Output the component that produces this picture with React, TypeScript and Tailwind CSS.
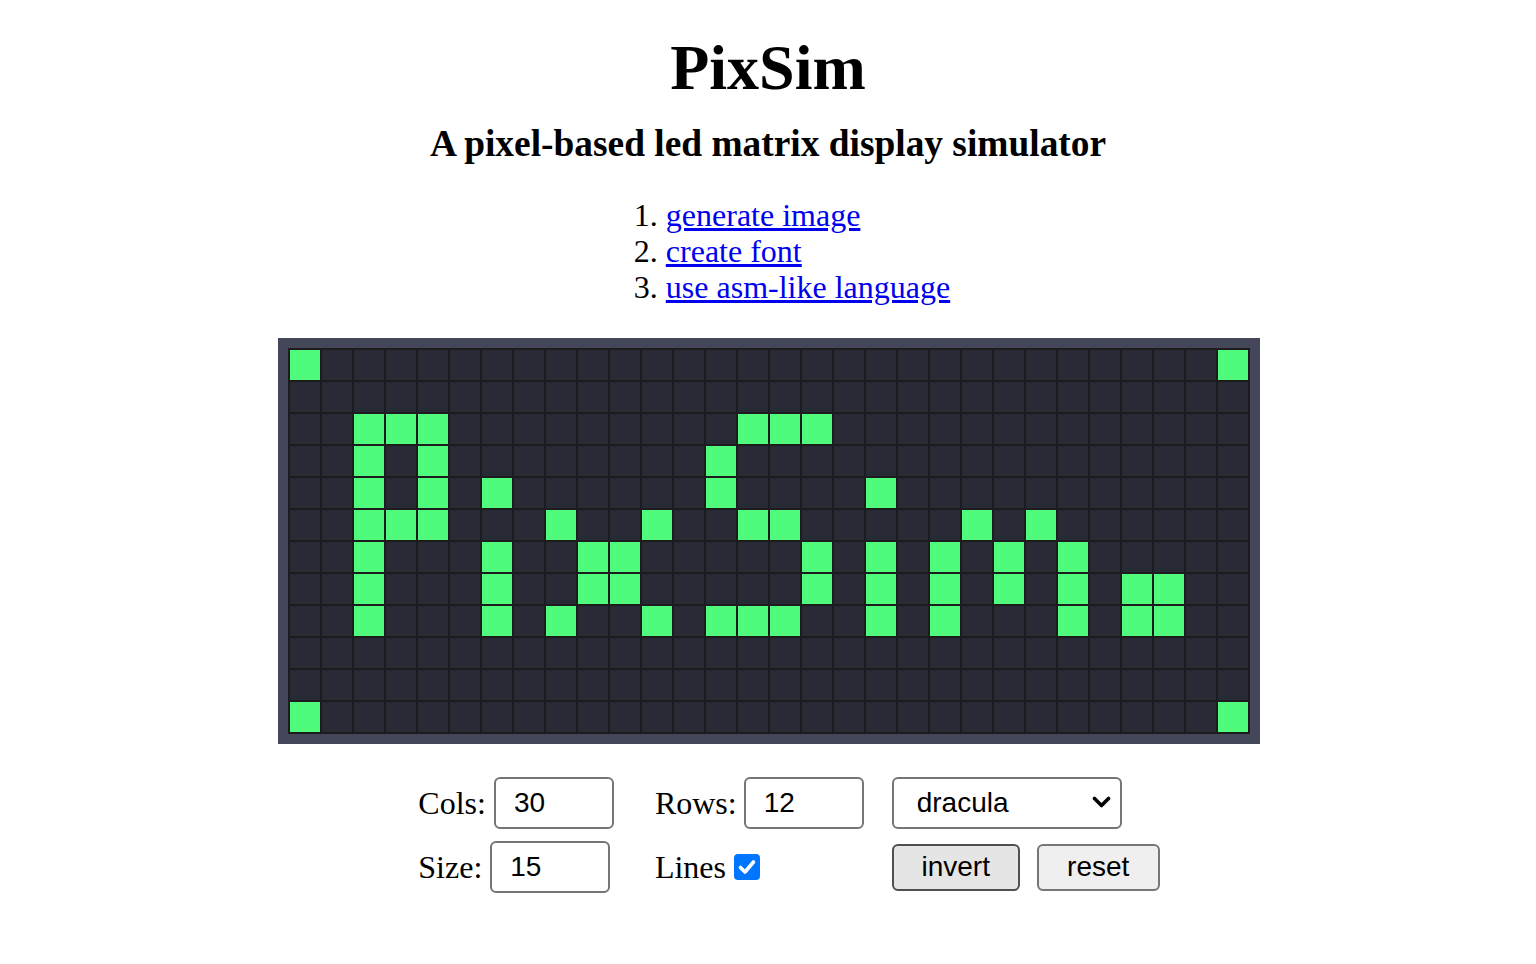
import { useState } from "react";

const COLS = 30;
const ROWS = 12;

// lit pixels per row (column indexes)
const LIT: Record<number, number[]> = {
  0: [0, 29],
  2: [2, 3, 4, 14, 15, 16],
  3: [2, 4, 13],
  4: [2, 4, 6, 13, 18],
  5: [2, 3, 4, 8, 11, 14, 15, 21, 23],
  6: [2, 6, 9, 10, 16, 18, 20, 22, 24],
  7: [2, 6, 9, 10, 16, 18, 20, 22, 24, 26, 27],
  8: [2, 6, 8, 11, 13, 14, 15, 18, 20, 24, 26, 27],
  11: [0, 29],
};

const serif = { fontFamily: '"Liberation Serif", "Times New Roman", serif' };
const sans = { fontFamily: '"Liberation Sans", Arial, sans-serif' };

function Matrix({ inverted }: { inverted: boolean }) {
  const cells = [];
  for (let r = 0; r < ROWS; r++) {
    for (let c = 0; c < COLS; c++) {
      const on = (LIT[r] ?? []).includes(c) !== inverted;
      cells.push(
        <div key={`${r}-${c}`} className={`w-[30px] h-[30px] ${on ? "bg-[#50fa7b]" : "bg-[#282a36]"}`} />
      );
    }
  }
  return (
    <div className="ml-[2px] p-[10px] bg-[#44475a]">
      <div className="grid grid-cols-[repeat(30,30px)] gap-[2px] p-[2px] bg-[#1c1c1e]">{cells}</div>
    </div>
  );
}

export default function App() {
  const [inverted, setInverted] = useState(false);
  const [lines, setLines] = useState(true);

  return (
    <div className="min-h-screen bg-white text-black pt-[31px] text-center" style={serif}>
      <h1 className="text-[64px] leading-[74px] font-bold">PixSim</h1>
      <h3 className="mt-[17px] text-[37.4px] leading-[43px] font-bold">A pixel-based led matrix display simulator</h3>

      <ol className="mt-[32px] inline-block pl-[80px] list-decimal text-left text-[32px] leading-[36px]">
        <li><a href="#" className="text-[#0000ee] underline">generate image</a></li>
        <li><a href="#" className="text-[#0000ee] underline">create font</a></li>
        <li><a href="#" className="text-[#0000ee] underline">use asm-like language</a></li>
      </ol>

      <div className="mt-[33px] flex justify-center">
        <Matrix inverted={inverted} />
      </div>

      {/* Controls */}
      <div className="mt-[33px] flex justify-center text-[32px]">
        <div className="ml-[42px] flex text-left">
          <div className="flex flex-col gap-[12px]">
            <label className="flex items-center gap-2 h-[52px]">
              Cols:
              <input defaultValue="30" className="w-[120px] h-[52px] px-[18px] text-[28px] border-2 border-[#767676] rounded-[6px] outline-none" style={sans} />
            </label>
            <label className="flex items-center gap-2 h-[52px]">
              Size:
              <input defaultValue="15" className="w-[120px] h-[52px] px-[18px] text-[28px] border-2 border-[#767676] rounded-[6px] outline-none" style={sans} />
            </label>
          </div>

          <div className="ml-[41px] flex flex-col gap-[12px]">
            <label className="flex items-center gap-[7px] h-[52px]">
              Rows:
              <input defaultValue="12" className="w-[120px] h-[52px] px-[18px] text-[28px] border-2 border-[#767676] rounded-[6px] outline-none" style={sans} />
            </label>
            <label className="flex items-center gap-2 h-[52px] cursor-pointer" onClick={() => setLines((v) => !v)}>
              Lines
              <span className={`w-[26px] h-[26px] rounded-[4px] flex items-center justify-center ${lines ? "bg-[#0075ff]" : "border-2 border-[#767676] bg-white"}`}>
                {lines && (
                  <svg width="26" height="26" viewBox="0 0 26 26" fill="none">
                    <path d="M6.5 13.5 L11 18 L19.5 8" stroke="white" strokeWidth="3.6" strokeLinecap="round" strokeLinejoin="round" />
                  </svg>
                )}
              </span>
            </label>
          </div>

          <div className="ml-[28px] flex flex-col gap-[12px]" style={sans}>
            <div className="relative w-[230px] h-[52px]">
              <select defaultValue="dracula" className="appearance-none w-full h-full pl-[23px] text-[28px] bg-white border-2 border-[#767676] rounded-[6px] outline-none">
                <option value="dracula">dracula</option>
                <option value="classic">classic</option>
                <option value="amber">amber</option>
              </select>
              <svg className="absolute right-[11px] top-[19px] pointer-events-none" width="19" height="12" viewBox="0 0 19 12" fill="none">
                <path d="M2.5 2.5 L9.5 9.5 L16.5 2.5" stroke="black" strokeWidth="3.6" strokeLinecap="round" strokeLinejoin="round" />
              </svg>
            </div>
            <div className="flex items-center gap-[17px] h-[52px]">
              <button onClick={() => setInverted((v) => !v)} className="w-[128px] h-[47px] text-[28px] bg-[#e5e5e5] border-2 border-[#4f4f4f] rounded-[6px]">
                invert
              </button>
              <button onClick={() => setInverted(false)} className="w-[123px] h-[47px] text-[28px] bg-[#efefef] border-2 border-[#767676] rounded-[6px]">
                reset
              </button>
            </div>
          </div>
        </div>
      </div>
    </div>
  );
}
